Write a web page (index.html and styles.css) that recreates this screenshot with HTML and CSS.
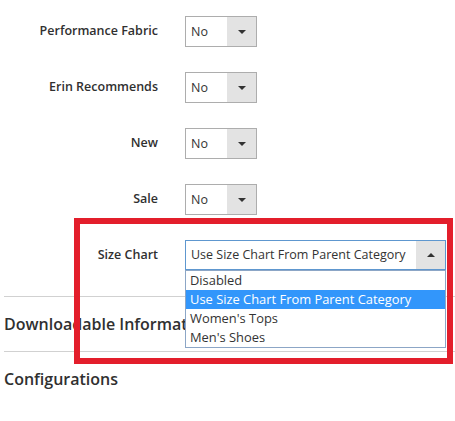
FILE: index.html
```html
<!DOCTYPE html>
<html>
<head>
  <meta charset="utf-8">
  <meta name="viewport" content="width=device-width, initial-scale=1">
  <title>Product attributes</title>
  <link rel="stylesheet" href="styles.css">
</head>
<body>
  <div class="page">

    <div class="field">
      <label class="field-label">Performance Fabric</label>
      <div class="select">
        <span class="select-value">No</span>
        <span class="select-arrow"><span class="caret"></span></span>
      </div>
    </div>

    <div class="field">
      <label class="field-label">Erin Recommends</label>
      <div class="select">
        <span class="select-value">No</span>
        <span class="select-arrow"><span class="caret"></span></span>
      </div>
    </div>

    <div class="field">
      <label class="field-label">New</label>
      <div class="select">
        <span class="select-value">No</span>
        <span class="select-arrow"><span class="caret"></span></span>
      </div>
    </div>

    <div class="field">
      <label class="field-label">Sale</label>
      <div class="select">
        <span class="select-value">No</span>
        <span class="select-arrow"><span class="caret"></span></span>
      </div>
    </div>

    <div class="field field-open">
      <label class="field-label">Size Chart</label>
      <div class="select select-wide">
        <span class="select-value">Use Size Chart From Parent Category</span>
        <span class="select-arrow"><span class="caret caret-up"></span></span>
        <ul class="options">
          <li>Disabled</li>
          <li class="selected">Use Size Chart From Parent Category</li>
          <li>Women's Tops</li>
          <li>Men's Shoes</li>
        </ul>
      </div>
    </div>

    <!-- collapsed sections -->
    <div class="section section-first">Downloadable Information</div>
    <div class="section">Configurations</div>

    <div class="highlight-frame"></div>
  </div>
</body>
</html>
```

FILE: styles.css
```css
body {
  margin: 0;
  padding: 0;
  background-color: #fff;
  font-family: 'Open Sans', 'Noto Sans', sans-serif;
  color: #333;
}

.page {
  position: relative;
  padding-top: 16px;
  height: 405px;
}

.field {
  display: flex;
  align-items: center;
  height: 31px;
  margin-bottom: 25px;
}

.field-label {
  width: 158px;
  margin-right: 27px;
  margin-top: -2px;
  text-align: right;
  font-size: 12.5px;
  font-weight: 600;
  color: #303030;
}

.select {
  position: relative;
  display: flex;
  width: 72px;
  height: 31px;
  box-sizing: border-box;
  border: 1px solid #adadad;
  background-color: #fff;
}

.select-value {
  flex: 1;
  padding-left: 5px;
  font-size: 12.5px;
  line-height: 29px;
  white-space: nowrap;
}

.select-arrow {
  display: flex;
  align-items: center;
  justify-content: center;
  width: 29px;
  background-color: #e3e3e3;
}

.caret {
  width: 0;
  height: 0;
  border-left: 4px solid transparent;
  border-right: 4px solid transparent;
  border-top: 4px solid #333;
}

.caret-up {
  border-top: none;
  border-bottom: 4px solid #333;
}

.field-open {
  height: 30px;
  margin-bottom: 0;
}

.select-wide {
  width: 261px;
  height: 30px;
  border-color: #5e97cf;
}

.select-wide .select-value {
  line-height: 28px;
}

.options {
  position: absolute;
  top: 29px;
  left: -1px;
  width: 261px;
  margin: 0;
  padding: 0;
  list-style: none;
  box-sizing: border-box;
  border: 1px solid #8ca6c6;
  background-color: #fff;
  z-index: 2;
}

.options li {
  height: 19px;
  padding-left: 4px;
  font-size: 12.9px;
  line-height: 19px;
  white-space: nowrap;
}

.options li.selected {
  background-color: #3296fb;
  color: #fff;
}

.section {
  margin-left: 4px;
  height: 54px;
  border-top: 1px solid #d1d1d1;
  font-size: 16px;
  font-weight: 600;
  line-height: 54px;
  color: #303030;
  white-space: nowrap;
}

.section-first {
  margin-top: 26px;
}

.highlight-frame {
  position: absolute;
  left: 74px;
  top: 218px;
  width: 379px;
  height: 146px;
  box-sizing: border-box;
  border: 6px solid #e31e2b;
  z-index: 3;
}
```
